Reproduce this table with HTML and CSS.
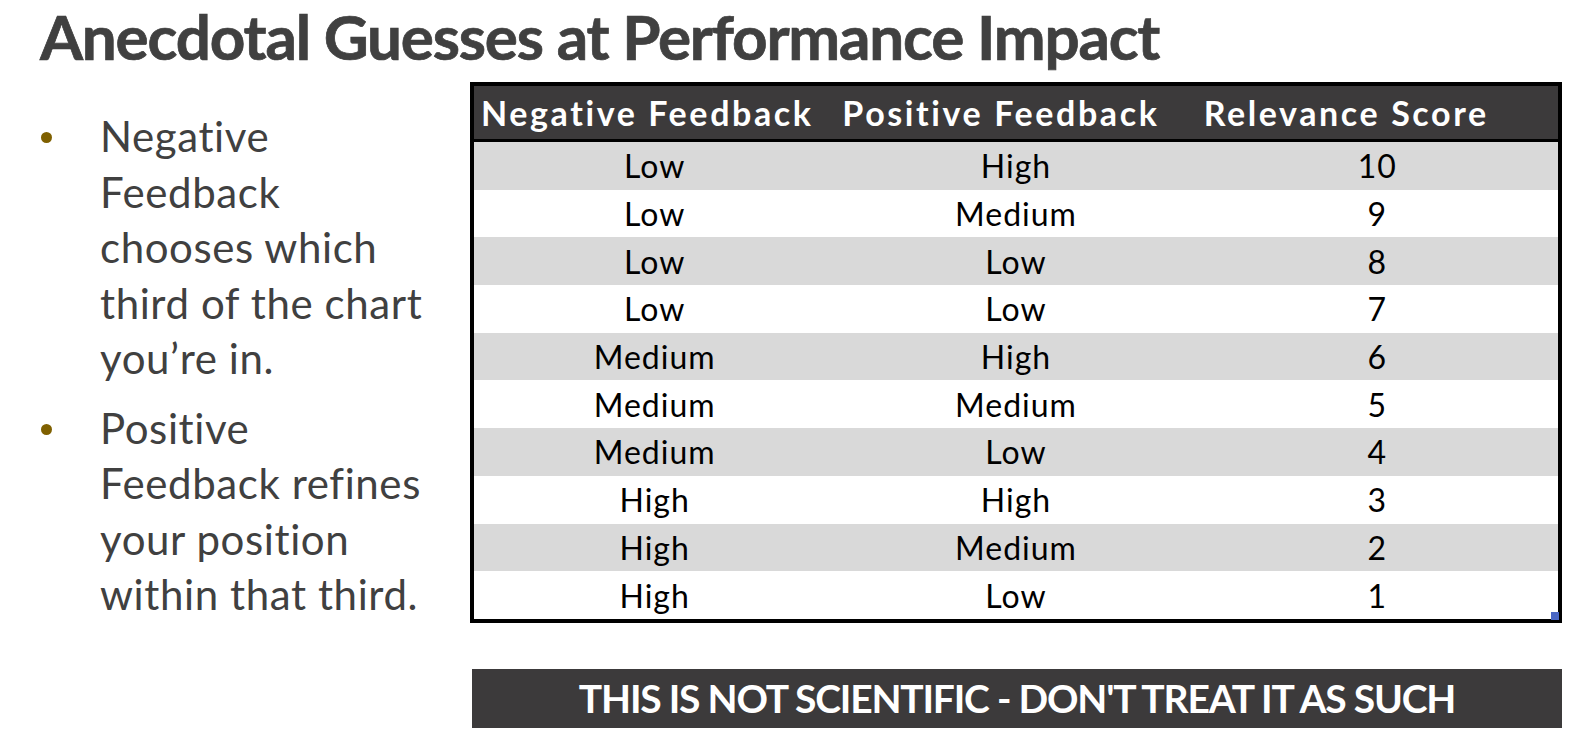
FILE: index.html
```html
<!DOCTYPE html>
<html lang="en">
<head>
<meta charset="utf-8">
<title>Anecdotal Guesses at Performance Impact</title>
<link rel="stylesheet" href="styles.css">
</head>
<body>
<div class="slide">
  <h1 class="title">Anecdotal Guesses at Performance Impact</h1>
  <div class="content">
    <ul class="bullets">
      <li><span class="dot"></span><span class="btext">Negative<br>Feedback<br>chooses which<br>third of the chart<br>you’re in.</span></li>
      <li><span class="dot"></span><span class="btext">Positive<br>Feedback refines<br>your position<br>within that third.</span></li>
    </ul>
    <div class="right">
      <div class="table-wrap">
        <table class="grid">
          <thead>
            <tr><th>Negative Feedback</th><th>Positive Feedback</th><th>Relevance Score</th></tr>
          </thead>
          <tbody>
            <tr><td>Low</td><td>High</td><td>10</td></tr>
            <tr><td>Low</td><td>Medium</td><td>9</td></tr>
            <tr><td>Low</td><td>Low</td><td>8</td></tr>
            <tr><td>Low</td><td>Low</td><td>7</td></tr>
            <tr><td>Medium</td><td>High</td><td>6</td></tr>
            <tr><td>Medium</td><td>Medium</td><td>5</td></tr>
            <tr><td>Medium</td><td>Low</td><td>4</td></tr>
            <tr><td>High</td><td>High</td><td>3</td></tr>
            <tr><td>High</td><td>Medium</td><td>2</td></tr>
            <tr><td>High</td><td>Low</td><td>1</td></tr>
          </tbody>
        </table>
        <span class="handle"></span>
      </div>
      <div class="banner">THIS IS NOT SCIENTIFIC - DON'T TREAT IT AS SUCH</div>
    </div>
  </div>
</div>
</body>
</html>
```
FILE: styles.css
```css
html, body {
  margin: 0;
  padding: 0;
  background: #ffffff;
}
.slide {
  width: 1580px;
  height: 748px;
  overflow: hidden;
  font-family: "Lato", "Liberation Sans", sans-serif;
}
.title {
  margin: 0;
  padding-left: 40px;
  height: 76px;
  font-size: 62px;
  line-height: 72px;
  font-weight: 700;
  letter-spacing: -1.2px;
  color: #404040;
  -webkit-text-stroke: 0.7px #404040;
  white-space: nowrap;
}
.content {
  display: flex;
  align-items: flex-start;
}
.bullets {
  list-style: none;
  margin: 0;
  padding: 33px 0 0 0;
  width: 470px;
  flex: none;
}
.bullets li {
  display: flex;
  align-items: flex-start;
  margin-bottom: 14px;
}
.dot {
  flex: none;
  width: 11px;
  height: 11px;
  border-radius: 50%;
  background: #7f6000;
  margin: 23px 48px 0 41px;
}
.btext {
  font-size: 42px;
  line-height: 55.5px;
  letter-spacing: 0.6px;
  color: #404040;
}
.right {
  width: 1092px;
  flex: none;
  padding-top: 6px;
}
.table-wrap {
  position: relative;
  border: 4px solid #000;
}
.grid {
  width: 100%;
  border-collapse: collapse;
  table-layout: fixed;
}
.grid th {
  background: #3c3a3b;
  color: #ffffff;
  font-size: 34px;
  font-weight: 700;
  letter-spacing: 2.6px;
  text-align: left;
  padding: 0 0 0 7px;
  height: 53px;
  border-bottom: 3px solid #000;
  white-space: nowrap;
}
.grid td {
  height: 47.7px;
  padding: 0;
  text-align: center;
  font-size: 32px;
  letter-spacing: 1px;
  color: #000;
}
.grid tbody tr:nth-child(odd) td {
  background: #d9d9d9;
}
.grid tbody tr:nth-child(even) td {
  background: #ffffff;
}
.handle {
  position: absolute;
  right: -1px;
  bottom: -1px;
  width: 8px;
  height: 8px;
  background: #4a67c4;
}
.banner {
  margin: 46px 0 0 2px;
  height: 59px;
  background: #3c3a3b;
  color: #ffffff;
  font-size: 39px;
  font-weight: 700;
  letter-spacing: -1.2px;
  line-height: 59px;
  text-align: center;
  white-space: nowrap;
}
```
